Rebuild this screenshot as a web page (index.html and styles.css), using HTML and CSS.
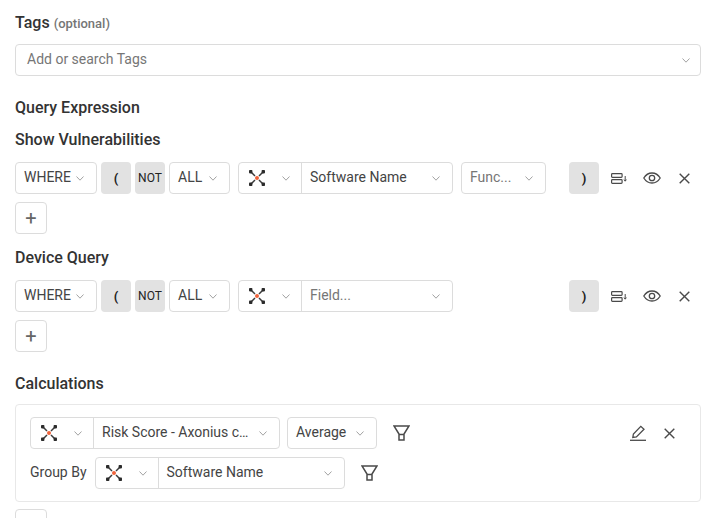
FILE: index.html
```html
<!DOCTYPE html>
<html>
<head lang="en">
    <meta charset="UTF-8">
    <title>Query</title>
    <link rel="stylesheet" href="styles.css">
</head>
<body>
<svg class="defs" width="0" height="0">
    <symbol id="adapter" viewBox="0 0 18 18">
        <path d="M3 3L7 7M15 3L11 7M3 15L7 11M15 15L11 11" fill="none" stroke="#3a3a3a" stroke-width="1.500"/>
        <g fill="#2b2b2b">
            <rect x="1" y="1" width="3.400" height="3.400" rx=".8"/>
            <rect x="13.600" y="1" width="3.400" height="3.400" rx=".8"/>
            <rect x="1" y="13.600" width="3.400" height="3.400" rx=".8"/>
            <rect x="13.600" y="13.600" width="3.400" height="3.400" rx=".8"/>
        </g>
        <circle cx="9" cy="9" r="2" fill="#f0643c"/>
    </symbol>
    <symbol id="chev" viewBox="0 0 8 5">
        <path d="M.5.500L4 4.200 7.500.500" fill="none" stroke="#8a8a8a" stroke-width=".8"/>
    </symbol>
    <symbol id="close" viewBox="0 0 11 11">
        <path d="M.7.700L10.300 10.300M10.300.700L.7 10.300" fill="none" stroke="#4a4a4a" stroke-width="1.400"/>
    </symbol>
    <symbol id="eye" viewBox="0 0 18 12">
        <path d="M.8 6C2.800 2.700 5.700 1 9 1s6.200 1.700 8.200 5c-2 3.300-4.900 5-8.200 5S2.800 9.300.8 6z" fill="none" stroke="#4a4a4a" stroke-width="1.300"/>
        <circle cx="9" cy="6" r="2.700" fill="none" stroke="#4a4a4a" stroke-width="1.300"/>
    </symbol>
    <symbol id="sort" viewBox="0 0 16 11">
        <g fill="none" stroke="#4a4a4a" stroke-width="1.200">
            <rect x=".6" y=".6" width="10.500" height="3.800" rx=".8"/>
            <rect x=".6" y="6.600" width="10.500" height="3.800" rx=".8"/>
            <path d="M14.200 3V8M13 6.600L14.200 8.200 15.400 6.600" stroke-width="1"/>
        </g>
    </symbol>
    <symbol id="filter" viewBox="0 0 17 16">
        <path d="M1 1H16L11 9V15H6V9zM6 9.500H11" fill="none" stroke="#4a4a4a" stroke-width="1.500"/>
    </symbol>
    <symbol id="edit" viewBox="0 0 16 16">
        <path d="M2.800 12.500L3.400 9 10.800 1.300 14 4.300 6.400 12z" fill="none" stroke="#4a4a4a" stroke-width="1.300"/>
        <path d="M0 15.300H16" stroke="#4a4a4a" stroke-width="1.300"/>
    </symbol>
</svg>

<div class="form">
    <div class="label tags-label">Tags <span class="optional">(optional)</span></div>
    <div class="select tags-select">
        <span class="placeholder">Add or search Tags</span>
        <svg class="chev"><use href="#chev"/></svg>
    </div>

    <div class="label query-label">Query Expression</div>
    <div class="label vuln-label">Show Vulnerabilities</div>
    <div class="row">
        <div class="select where">WHERE <svg class="chev"><use href="#chev"/></svg></div>
        <div class="bracket">(</div>
        <div class="bracket not">NOT</div>
        <div class="select all">ALL <svg class="chev"><use href="#chev"/></svg></div>
        <div class="field-group">
            <div class="adapter"><svg class="logo"><use href="#adapter"/></svg><svg class="chev"><use href="#chev"/></svg></div>
            <div class="field">Software Name <svg class="chev"><use href="#chev"/></svg></div>
        </div>
        <div class="select func"><span class="placeholder">Func...</span> <svg class="chev"><use href="#chev"/></svg></div>
        <div class="row-end">
            <div class="bracket">)</div>
            <svg class="ico-sort"><use href="#sort"/></svg>
            <svg class="ico-eye"><use href="#eye"/></svg>
            <svg class="ico-close"><use href="#close"/></svg>
        </div>
    </div>
    <div class="add">+</div>

    <div class="label device-label">Device Query</div>
    <div class="row">
        <div class="select where">WHERE <svg class="chev"><use href="#chev"/></svg></div>
        <div class="bracket">(</div>
        <div class="bracket not">NOT</div>
        <div class="select all">ALL <svg class="chev"><use href="#chev"/></svg></div>
        <div class="field-group">
            <div class="adapter"><svg class="logo"><use href="#adapter"/></svg><svg class="chev"><use href="#chev"/></svg></div>
            <div class="field"><span class="placeholder">Field...</span> <svg class="chev"><use href="#chev"/></svg></div>
        </div>
        <div class="row-end">
            <div class="bracket">)</div>
            <svg class="ico-sort"><use href="#sort"/></svg>
            <svg class="ico-eye"><use href="#eye"/></svg>
            <svg class="ico-close"><use href="#close"/></svg>
        </div>
    </div>
    <div class="add">+</div>

    <div class="label calc-label">Calculations</div>
    <div class="card">
        <div class="card-row">
            <div class="field-group">
                <div class="adapter"><svg class="logo"><use href="#adapter"/></svg><svg class="chev"><use href="#chev"/></svg></div>
                <div class="field risk">Risk Score - Axonius c… <svg class="chev"><use href="#chev"/></svg></div>
            </div>
            <div class="select average">Average <svg class="chev"><use href="#chev"/></svg></div>
            <svg class="ico-filter"><use href="#filter"/></svg>
            <div class="card-actions">
                <svg class="ico-edit"><use href="#edit"/></svg>
                <svg class="ico-close"><use href="#close"/></svg>
            </div>
        </div>
        <div class="card-row">
            <span class="group-by">Group By</span>
            <div class="field-group">
                <div class="adapter"><svg class="logo"><use href="#adapter"/></svg><svg class="chev"><use href="#chev"/></svg></div>
                <div class="field risk">Software Name <svg class="chev"><use href="#chev"/></svg></div>
            </div>
            <svg class="ico-filter"><use href="#filter"/></svg>
        </div>
    </div>
    <div class="add add-last"></div>
</div>
</body>
</html>
```

FILE: styles.css
```css
*{
    margin: 0;
    padding: 0;
    box-sizing: border-box;
}
html,body{
    height: 518px;
    overflow: hidden;
}
body{
    background: #fff;
    font-family: Roboto, "Liberation Sans", sans-serif;
    font-size: 14px;
    color: #444;
}
.defs{
    position: absolute;
}
.form{
    width: 686px;
    margin-left: 15px;
    padding-top: 13px;
}
.label{
    font-size: 16px;
    font-weight: 500;
    line-height: 19px;
    color: #333;
}
.optional{
    font-size: 13px;
    line-height: 1;
    color: #757575;
}
.tags-label{
    margin-bottom: 12px;
}
.query-label{
    margin-top: 22px;
}
.vuln-label{
    margin-top: 13px;
    margin-bottom: 13px;
}
.device-label{
    margin-top: 14px;
    margin-bottom: 13px;
}
.calc-label{
    margin-top: 22px;
    margin-bottom: 11px;
}
.select,.field-group,.add{
    height: 32px;
    border: 1px solid #dcdcdc;
    border-radius: 4px;
    background: #fff;
}
/* text sits 1px above the box centre, the chevron does not */
.select{
    display: flex;
    align-items: center;
    justify-content: space-between;
    padding: 0 12px 2px 8px;
}
.chev{
    width: 8px;
    height: 5px;
    margin-top: 2px;
    flex: none;
}
.placeholder{
    color: #767676;
}
.tags-select{
    padding: 0 10px 2px 11px;
}
.row{
    display: flex;
    align-items: center;
}
.where{
    width: 82px;
}
.bracket{
    width: 30px;
    height: 32px;
    margin-left: 4px;
    background: #e2e2e2;
    border-radius: 4px;
    display: flex;
    align-items: center;
    justify-content: center;
    font-size: 13px;
    font-weight: 700;
    color: #222;
}
.not{
    font-size: 12px;
    font-weight: 400;
}
.all{
    width: 61px;
    margin-left: 4px;
}
.field-group{
    display: flex;
    margin-left: 8px;
}
.adapter{
    width: 63px;
    display: flex;
    align-items: center;
    padding-left: 9px;
    border-right: 1px solid #dcdcdc;
}
.adapter .chev{
    margin-top: 0;
    margin-left: 16px;
}
.logo{
    width: 18px;
    height: 18px;
}
.field{
    width: 150px;
    display: flex;
    align-items: center;
    justify-content: space-between;
    padding: 0 12px 2px 8px;
}
.func{
    width: 85px;
    margin-left: 8px;
}
.row-end{
    margin-left: auto;
    width: 132px;
    display: flex;
    align-items: center;
}
.row-end .bracket{
    margin-left: 0;
}
.ico-sort{
    width: 16px;
    height: 11px;
    margin-left: 12px;
}
.ico-eye{
    width: 18px;
    height: 12px;
    margin-left: 16px;
}
.ico-close{
    width: 11px;
    height: 11px;
    margin-left: 18px;
}
.add{
    width: 32px;
    margin-top: 8px;
    display: flex;
    align-items: center;
    justify-content: center;
    font-size: 20px;
    color: #666;
}
.card{
    height: 98px;
    border: 1px solid #e8e8e8;
    border-radius: 4px;
    padding: 12px 14px;
    display: flex;
    flex-direction: column;
    gap: 8px;
}
.card-row{
    display: flex;
    align-items: center;
}
.card-row > .field-group:first-child{
    margin-left: 0;
}
.risk{
    width: 185px;
}
.average{
    width: 90px;
    margin-left: 7px;
}
.ico-filter{
    width: 17px;
    height: 16px;
    margin-left: 16px;
}
.card-actions{
    margin-left: auto;
    margin-right: 11px;
    display: flex;
    align-items: center;
}
.ico-edit{
    width: 16px;
    height: 16px;
}
.group-by{
    padding-bottom: 2px;
}
.add-last{
    margin-top: 7px;
}
```
